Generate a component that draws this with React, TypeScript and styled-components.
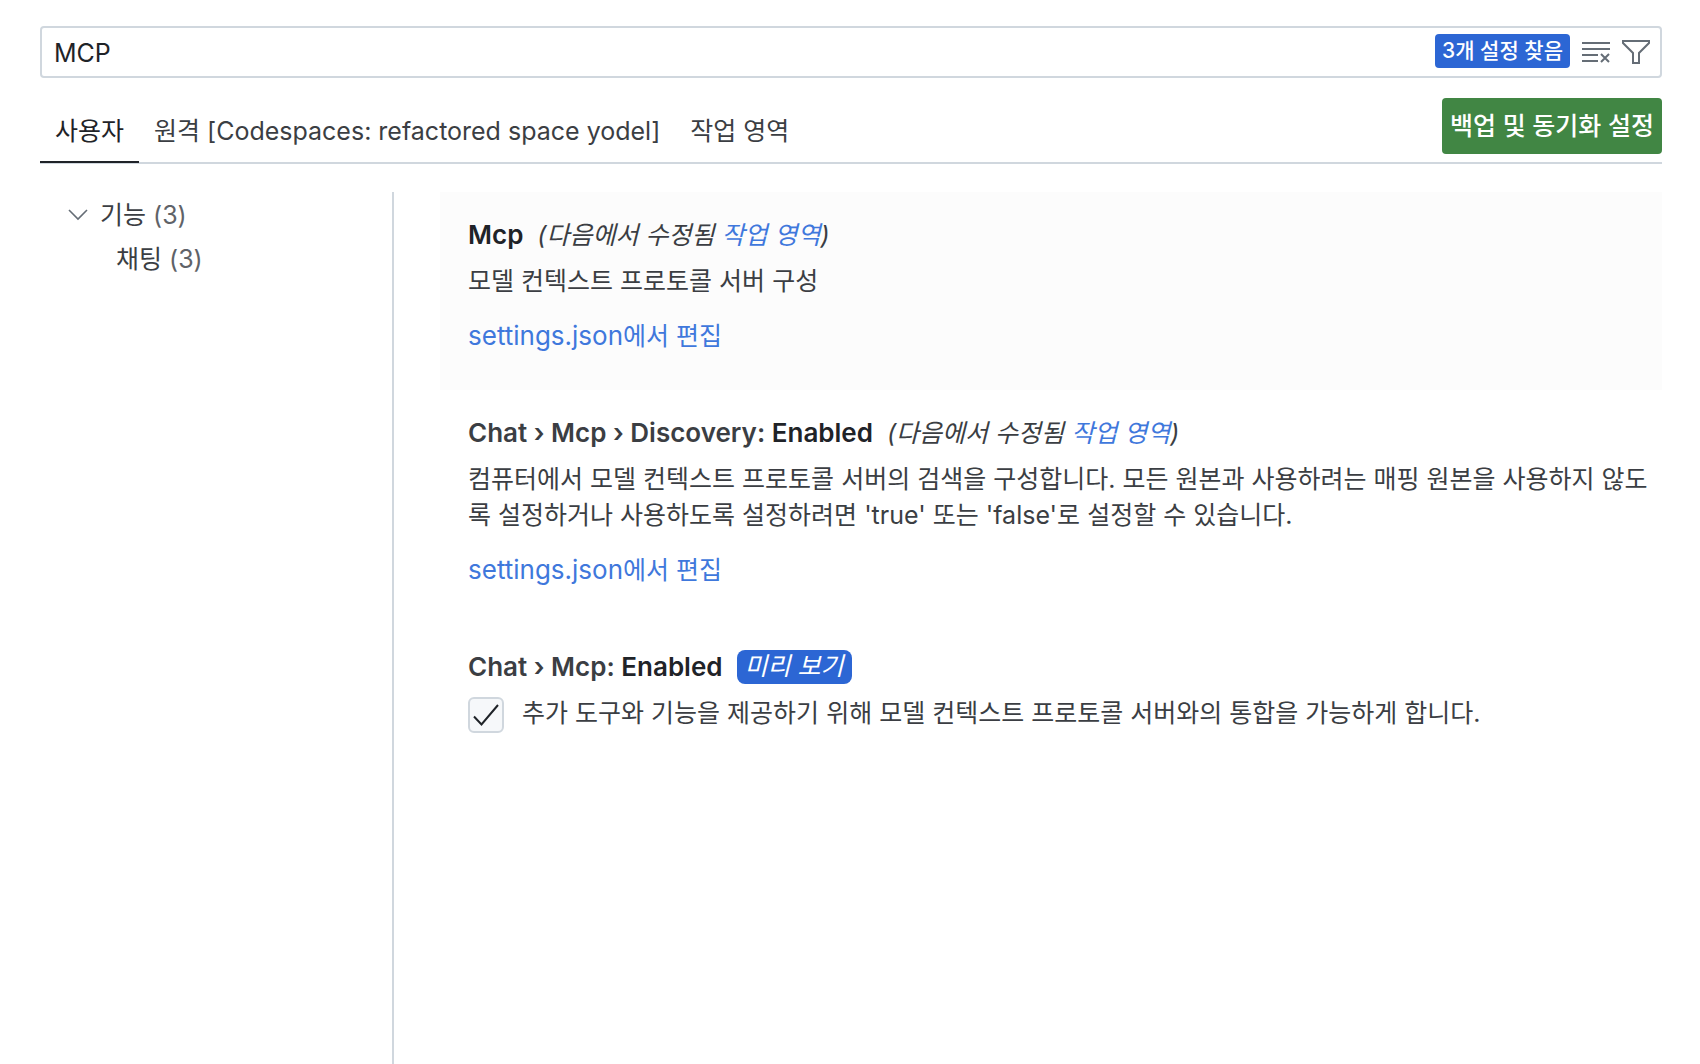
import React, { useState } from "react";
import styled, { createGlobalStyle } from "styled-components";

const color = {
  text: "#3b3e43",
  strong: "#1f2328",
  muted: "#5f6368",
  icon: "#656d76",
  border: "#d0d7de",
  link: "#3f78dc",
  badge: "#2c66d4",
  green: "#418644",
};

const GlobalStyle = createGlobalStyle`
  * { box-sizing: border-box; }
  body { margin: 0; background: #fff; }
  button, input { font: inherit; color: inherit; }
`;

const Page = styled.div`
  display: flex;
  flex-direction: column;
  min-height: 100vh;
  padding: 26px 38px 0 40px;
  font-family: Inter, "Noto Sans CJK KR", sans-serif;
  font-size: 25px;
  line-height: 36px;
  color: ${color.text};
`;

const SearchBox = styled.div`
  display: flex;
  align-items: center;
  height: 52px;
  padding: 0 10px 0 12px;
  border: 2px solid ${color.border};
  border-radius: 4px;
`;

const SearchInput = styled.input`
  flex: 1;
  min-width: 0;
  padding: 2px 0 0;
  border: 0;
  outline: 0;
  background: none;
  color: ${color.strong};
`;

const CountBadge = styled.span`
  height: 34px;
  margin: 0 12px 2px 0;
  padding: 0 7px;
  border-radius: 4px;
  background: ${color.badge};
  color: #fff;
  font-size: 21px;
  font-weight: 500;
  line-height: 34px;
`;

const IconButton = styled.button`
  display: flex;
  padding: 0;
  border: 0;
  background: none;
  color: ${color.icon};

  & + & {
    margin-left: 12px;
  }
`;

const TabBar = styled.div`
  display: flex;
  justify-content: space-between;
  align-items: flex-start;
  margin-top: 20px;
  border-bottom: 2px solid ${color.border};
`;

const Tabs = styled.div`
  display: flex;
  align-self: stretch;
  margin-bottom: -1px;
`;

const Tab = styled.button<{ $active?: boolean }>`
  padding: 2px 15px 0;
  border: 0;
  border-bottom: 2px solid ${(p) => (p.$active ? color.strong : "transparent")};
  background: none;
  color: ${(p) => (p.$active ? color.strong : color.text)};
`;

const SyncButton = styled.button`
  height: 56px;
  margin-bottom: 8px;
  padding: 0 8px;
  border: 0;
  border-radius: 4px;
  background: ${color.green};
  color: #fff;
  font-weight: 500;
`;

const Body = styled.div`
  flex: 1;
  display: grid;
  grid-template-columns: 354px 1fr;
  column-gap: 46px;
  padding-top: 28px;
`;

const Sidebar = styled.nav`
  border-right: 2px solid ${color.border};
`;

const TreeRow = styled.button<{ $level: number }>`
  display: flex;
  align-items: center;
  gap: 10px;
  width: 100%;
  height: 44px;
  padding: 2px 0 0 ${(p) => (p.$level ? 76 : 26)}px;
  border: 0;
  background: none;
  text-align: left;
`;

const Count = styled.span`
  color: ${color.muted};
`;

const Setting = styled.section<{ $focused?: boolean }>`
  padding: 24px 8px 36px 28px;
  background: ${(p) => (p.$focused ? "#fcfcfc" : "transparent")};
`;

const Title = styled.h3`
  display: flex;
  align-items: center;
  gap: 14px;
  height: 38px;
  margin: 0 0 9px;
  font-size: 26px;
  font-weight: 600;
`;

const Label = styled.span`
  color: ${color.strong};
`;

const Scope = styled.em`
  font-size: 25px;
  font-weight: 400;
`;

const Description = styled.p`
  margin: 0;
`;

const Link = styled.a`
  color: ${color.link};
  text-decoration: none;
`;

const EditLink = styled(Link)`
  display: block;
  width: fit-content;
  margin-top: 19px;
`;

const FileName = styled.span`
  font-size: 26px;
  line-height: 1;
`;

const PreviewBadge = styled.em`
  height: 34px;
  padding: 0 8px;
  border-radius: 8px;
  background: ${color.badge};
  color: #fff;
  font-size: 25px;
  font-weight: 400;
  line-height: 32px;
`;

const CheckRow = styled.label`
  display: flex;
  align-items: flex-start;
  gap: 18px;
`;

const CheckFrame = styled.span`
  display: grid;
  flex: none;
  width: 36px;
  height: 36px;
  margin-top: 2px;

  & > * {
    grid-area: 1 / 1;
  }
`;

const CheckInput = styled.input`
  appearance: none;
  margin: 0;
  border: 2px solid ${color.border};
  border-radius: 6px;
  background: #f6f8fa;
`;

const CheckMark = styled.svg`
  pointer-events: none;
`;

function ClearIcon() {
  return (
    <svg width="28" height="28" viewBox="0 0 28 28" fill="none" stroke="currentColor" strokeWidth="2">
      <path d="M0 5h28M0 11h28M0 17h16M0 23h16" />
      <path d="M19 16l8 8M27 16l-8 8" />
    </svg>
  );
}

function FilterIcon() {
  return (
    <svg width="28" height="28" viewBox="0 0 28 28" fill="none" stroke="currentColor" strokeWidth="2">
      <path d="M1 3h26v2l-10 10v10h-6V15L1 5z" />
    </svg>
  );
}

function ChevronIcon() {
  return (
    <svg width="24" height="24" viewBox="0 0 24 24" fill="none" stroke={color.icon} strokeWidth="1.600">
      <path d="M3 7l9 9 9-9" />
    </svg>
  );
}

function ModifiedIn() {
  return (
    <Scope>
      (다음에서 수정됨 <Link href="#workspace">작업 영역</Link>)
    </Scope>
  );
}

function EditInSettings() {
  return (
    <EditLink href="#settings.json">
      <FileName>settings.json</FileName>에서 편집
    </EditLink>
  );
}

export default function App() {
  const [query, setQuery] = useState("MCP");
  const [enabled, setEnabled] = useState(true);

  return (
    <>
      <GlobalStyle />
      <Page lang="ko">
        <SearchBox>
          <SearchInput aria-label="설정 검색" value={query} onChange={(e) => setQuery(e.target.value)} />
          <CountBadge>3개 설정 찾음</CountBadge>
          <IconButton aria-label="검색 지우기">
            <ClearIcon />
          </IconButton>
          <IconButton aria-label="필터">
            <FilterIcon />
          </IconButton>
        </SearchBox>

        <TabBar>
          <Tabs role="tablist">
            <Tab role="tab" aria-selected $active>
              사용자
            </Tab>
            <Tab role="tab">원격 [Codespaces: refactored space yodel]</Tab>
            <Tab role="tab">작업 영역</Tab>
          </Tabs>
          <SyncButton>백업 및 동기화 설정</SyncButton>
        </TabBar>

        <Body>
          <Sidebar>
            <TreeRow $level={0}>
              <ChevronIcon />
              <span>
                기능 <Count>(3)</Count>
              </span>
            </TreeRow>
            <TreeRow $level={1}>
              <span>
                채팅 <Count>(3)</Count>
              </span>
            </TreeRow>
          </Sidebar>

          <main>
            <Setting $focused>
              <Title>
                <Label>Mcp</Label>
                <ModifiedIn />
              </Title>
              <Description>모델 컨텍스트 프로토콜 서버 구성</Description>
              <EditInSettings />
            </Setting>

            <Setting>
              <Title>
                <span>
                  Chat › Mcp › Discovery: <Label>Enabled</Label>
                </span>
                <ModifiedIn />
              </Title>
              <Description>
                컴퓨터에서 모델 컨텍스트 프로토콜 서버의 검색을 구성합니다. 모든 원본과 사용하려는 매핑 원본을
                사용하지 않도록 설정하거나 사용하도록 설정하려면 'true' 또는 'false'로 설정할 수 있습니다.
              </Description>
              <EditInSettings />
            </Setting>

            <Setting>
              <Title>
                <span>
                  Chat › Mcp: <Label>Enabled</Label>
                </span>
                <PreviewBadge>미리 보기</PreviewBadge>
              </Title>
              <CheckRow>
                <CheckFrame>
                  <CheckInput type="checkbox" checked={enabled} onChange={(e) => setEnabled(e.target.checked)} />
                  {enabled && (
                    <CheckMark width="36" height="36" viewBox="0 0 36 36" fill="none" stroke={color.strong} strokeWidth="2">
                      <path d="M6 19.500l7.500 8L30 8" />
                    </CheckMark>
                  )}
                </CheckFrame>
                <span>추가 도구와 기능을 제공하기 위해 모델 컨텍스트 프로토콜 서버와의 통합을 가능하게 합니다.</span>
              </CheckRow>
            </Setting>
          </main>
        </Body>
      </Page>
    </>
  );
}
